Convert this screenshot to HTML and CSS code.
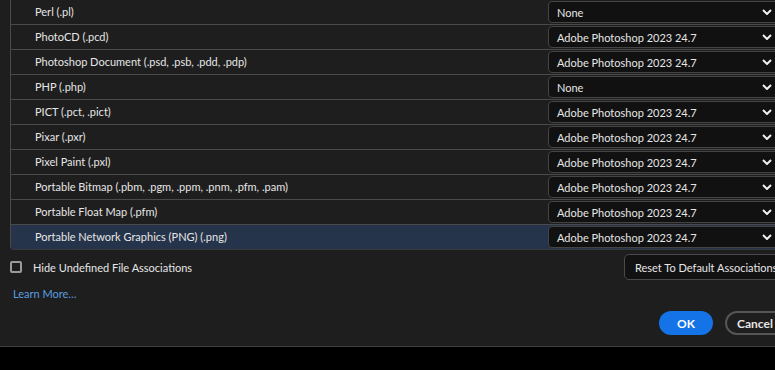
FILE: index.html
```html
<!DOCTYPE html>
<html lang="en">
<head>
  <meta charset="UTF-8" />
  <title>File Handling - File Associations</title>
  <meta content="width=device-width, initial-scale=1.0" name="viewport" />
  <link rel="stylesheet" href="styles.css">
</head>
<body>
  <div class="dialog">
    <div class="assoc-table">
      <div class="row"><div class="name">Perl (.pl)</div><div class="cell"><div class="select"><span>None</span><svg viewBox="0 0 10 6"><path d="M1 1l4 4 4-4"/></svg></div></div></div>
      <div class="row"><div class="name">PhotoCD (.pcd)</div><div class="cell"><div class="select"><span>Adobe Photoshop 2023 24.7</span><svg viewBox="0 0 10 6"><path d="M1 1l4 4 4-4"/></svg></div></div></div>
      <div class="row"><div class="name">Photoshop Document (.psd, .psb, .pdd, .pdp)</div><div class="cell"><div class="select"><span>Adobe Photoshop 2023 24.7</span><svg viewBox="0 0 10 6"><path d="M1 1l4 4 4-4"/></svg></div></div></div>
      <div class="row"><div class="name">PHP (.php)</div><div class="cell"><div class="select"><span>None</span><svg viewBox="0 0 10 6"><path d="M1 1l4 4 4-4"/></svg></div></div></div>
      <div class="row"><div class="name">PICT (.pct, .pict)</div><div class="cell"><div class="select"><span>Adobe Photoshop 2023 24.7</span><svg viewBox="0 0 10 6"><path d="M1 1l4 4 4-4"/></svg></div></div></div>
      <div class="row"><div class="name">Pixar (.pxr)</div><div class="cell"><div class="select"><span>Adobe Photoshop 2023 24.7</span><svg viewBox="0 0 10 6"><path d="M1 1l4 4 4-4"/></svg></div></div></div>
      <div class="row"><div class="name">Pixel Paint (.pxl)</div><div class="cell"><div class="select"><span>Adobe Photoshop 2023 24.7</span><svg viewBox="0 0 10 6"><path d="M1 1l4 4 4-4"/></svg></div></div></div>
      <div class="row"><div class="name">Portable Bitmap (.pbm, .pgm, .ppm, .pnm, .pfm, .pam)</div><div class="cell"><div class="select"><span>Adobe Photoshop 2023 24.7</span><svg viewBox="0 0 10 6"><path d="M1 1l4 4 4-4"/></svg></div></div></div>
      <div class="row"><div class="name">Portable Float Map (.pfm)</div><div class="cell"><div class="select"><span>Adobe Photoshop 2023 24.7</span><svg viewBox="0 0 10 6"><path d="M1 1l4 4 4-4"/></svg></div></div></div>
      <div class="row selected"><div class="name">Portable Network Graphics (PNG) (.png)</div><div class="cell"><div class="select"><span>Adobe Photoshop 2023 24.7</span><svg viewBox="0 0 10 6"><path d="M1 1l4 4 4-4"/></svg></div></div></div>
    </div>

    <div class="options">
      <label class="check"><span class="box"></span>Hide Undefined File Associations</label>
      <button class="reset">Reset To Default Associations</button>
    </div>

    <a class="learn" href="#">Learn More…</a>

    <div class="actions">
      <button class="ok">OK</button>
      <button class="cancel">Cancel</button>
    </div>
  </div>
</body>
</html>
```

FILE: styles.css
```css
html, body { margin: 0; background: #000; overflow: hidden; }
body { font-family: Lato, "Noto Sans", sans-serif; font-size: 11px; color: #e6e6e6; }

.dialog {
  width: 810px;
  height: 347px;
  padding-left: 10px;
  box-sizing: border-box;
  background: #1e1e1e;
  border-bottom: 1px solid #3e3e3e;
}

.assoc-table {
  border-left: 1px solid #4a4a4a;
  border-bottom-left-radius: 4px;
  overflow: hidden;
}

.row {
  display: grid;
  grid-template-columns: 537px 1fr;
  height: 24px;
  border-bottom: 1px solid #4a4a4a;
}

.row .name {
  padding-left: 24px;
  line-height: 24px;
  white-space: nowrap;
}

.row.selected { background: #25344a; }
.row:last-child { border-bottom-color: #3a3a3a; }

.cell { padding-top: 1px; }

.select {
  display: flex;
  align-items: center;
  justify-content: space-between;
  height: 22px;
  width: 235px;
  box-sizing: border-box;
  padding: 0 10px 0 8px;
  background: #111;
  border: 1px solid #444;
  border-radius: 4px;
}

.select svg {
  width: 10px;
  height: 6px;
  fill: none;
  stroke: #f0f0f0;
  stroke-width: 2;
}

.options {
  display: flex;
  justify-content: space-between;
  align-items: center;
  margin-top: 4px;
  width: 786px;
}

.check {
  display: flex;
  align-items: center;
  gap: 11px;
}

.check .box {
  width: 8px;
  height: 8px;
  border: 2px solid #9a9a9a;
  border-radius: 2px;
}

.reset {
  font: inherit;
  color: #e6e6e6;
  background: #121212;
  border: 1px solid #4a4a4a;
  border-radius: 5px;
  height: 26px;
  padding: 0 10px;
  width: 172px;
  text-align: left;
  white-space: nowrap;
}

.learn {
  display: block;
  margin-top: 7px;
  margin-left: 3px;
  color: #5a9de0;
  text-decoration: none;
}

.actions {
  display: flex;
  gap: 12px;
  margin-top: 11px;
  margin-left: 649px;
}

.actions button {
  font: inherit;
  font-size: 12px;
  font-weight: 700;
  height: 24px;
  border-radius: 12px;
  padding: 0 12px;
}

.ok {
  width: 54px;
  background: #1473e6;
  color: #fff;
  border: none;
}

.cancel {
  width: 70px;
  background: #1e1e1e;
  color: #e6e6e6;
  border: 2px solid #555;
  text-align: left;
  padding-left: 10px !important;
}
```
